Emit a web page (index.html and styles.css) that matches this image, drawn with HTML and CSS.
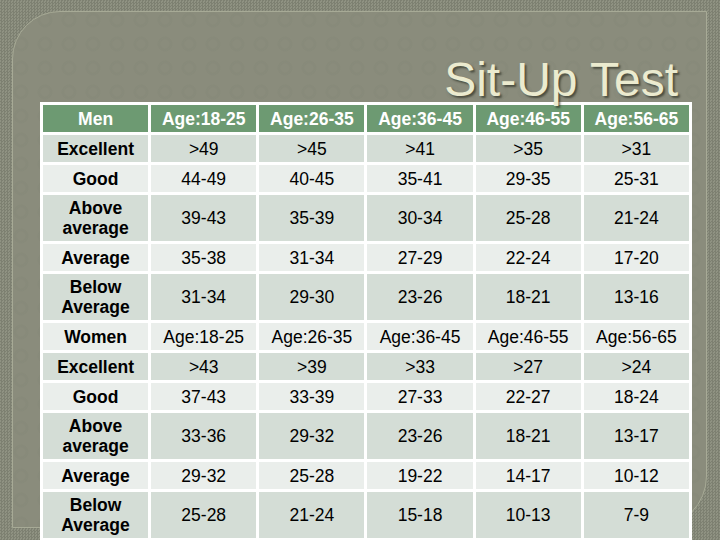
FILE: index.html
```html
<!DOCTYPE html>
<html>
<head>
<meta charset="utf-8">
<link rel="stylesheet" href="styles.css">
</head>
<body>
<div class="panel">
  <h1 class="title">Sit-Up Test</h1>
  <table class="grid">
    <tr class="head"><th>Men</th><th>Age:18-25</th><th>Age:26-35</th><th>Age:36-45</th><th>Age:46-55</th><th>Age:56-65</th></tr>
    <tr class="dark"><th>Excellent</th><td>&gt;49</td><td>&gt;45</td><td>&gt;41</td><td>&gt;35</td><td>&gt;31</td></tr>
    <tr class="light"><th>Good</th><td>44-49</td><td>40-45</td><td>35-41</td><td>29-35</td><td>25-31</td></tr>
    <tr class="dark tall"><th>Above<br>average</th><td>39-43</td><td>35-39</td><td>30-34</td><td>25-28</td><td>21-24</td></tr>
    <tr class="light"><th>Average</th><td>35-38</td><td>31-34</td><td>27-29</td><td>22-24</td><td>17-20</td></tr>
    <tr class="dark tall"><th>Below<br>Average</th><td>31-34</td><td>29-30</td><td>23-26</td><td>18-21</td><td>13-16</td></tr>
    <tr class="light"><th>Women</th><td>Age:18-25</td><td>Age:26-35</td><td>Age:36-45</td><td>Age:46-55</td><td>Age:56-65</td></tr>
    <tr class="dark"><th>Excellent</th><td>&gt;43</td><td>&gt;39</td><td>&gt;33</td><td>&gt;27</td><td>&gt;24</td></tr>
    <tr class="light"><th>Good</th><td>37-43</td><td>33-39</td><td>27-33</td><td>22-27</td><td>18-24</td></tr>
    <tr class="dark tall"><th>Above<br>average</th><td>33-36</td><td>29-32</td><td>23-26</td><td>18-21</td><td>13-17</td></tr>
    <tr class="light"><th>Average</th><td>29-32</td><td>25-28</td><td>19-22</td><td>14-17</td><td>10-12</td></tr>
    <tr class="dark tall"><th>Below<br>Average</th><td>25-28</td><td>21-24</td><td>15-18</td><td>10-13</td><td>7-9</td></tr>
  </table>
</div>
</body>
</html>
```
FILE: styles.css
```css
html, body {
  margin: 0;
  padding: 0;
}
body {
  width: 720px;
  height: 540px;
  overflow: hidden;
  background-color: #858878;
  background-image: repeating-conic-gradient(#7d8071 0 25%, #8f9282 0 50%);
  background-size: 3px 3px;
  font-family: "Liberation Sans", Arial, sans-serif;
}
.panel {
  margin: 11px 0 0 12px;
  width: 693px;
  height: 515px;
  border: 1px solid #a7aa96;
  border-top-left-radius: 48px;
  border-bottom-right-radius: 52px;
  background-color: #8a8c7c;
  background-image: radial-gradient(circle, transparent 4px, rgba(125,128,112,0.18) 5px, rgba(125,128,112,0.18) 7px, transparent 8px);
  background-size: 24px 24px;
  background-position: -4px -4px;
}
.title {
  margin: 0;
  padding: 46px 28px 0 0;
  height: 44px;
  line-height: 44px;
  text-align: right;
  font-family: "Liberation Sans", Arial, sans-serif;
  font-weight: normal;
  font-size: 48px;
  color: #ebebcf;
  text-shadow: 2px 2px 2px rgba(50, 52, 40, 0.7);
}
.grid {
  margin-left: 27px;
  width: 652px;
  table-layout: fixed;
  border-collapse: separate;
  border-spacing: 3px;
  background: #ffffff;
  font-size: 17.5px;
  color: #000;
}
.grid th, .grid td {
  padding: 0;
  height: 27px;
  text-align: center;
  vertical-align: middle;
  line-height: 20px;
}
.grid th {
  font-weight: bold;
}
.grid td {
  font-weight: normal;
}
.grid tr.tall th, .grid tr.tall td {
  height: 46px;
}
.head th {
  background: #6d9a72;
  color: #ffffff;
}
.dark th, .dark td {
  background: #d4ddd6;
}
.light th, .light td {
  background: #eaeeeb;
}
```
